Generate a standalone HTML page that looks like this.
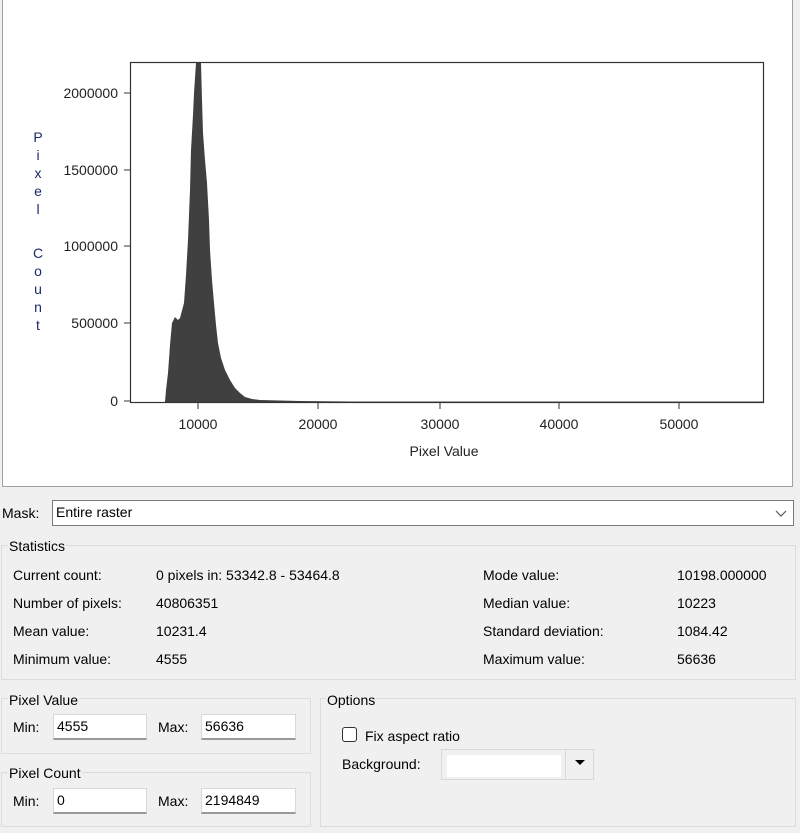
<!DOCTYPE html>
<html><head><style>
body{margin:0;width:800px;height:833px;background:#f0f0f0;font-family:"Liberation Sans",sans-serif;font-size:14px;color:#000;position:relative;overflow:hidden}
.a{position:absolute;white-space:nowrap}
.box{position:absolute;border:1px solid #dcdcdc}
.t{position:absolute;background:#f0f0f0;padding:0 1px;line-height:16px}
.in{position:absolute;background:#fff;border:1px solid #d8d8d8;border-bottom:2px solid #9a9a9a;box-sizing:border-box;padding-left:3px;line-height:22px}
</style></head><body>
<div style="position:absolute;left:2px;top:-1px;width:791px;height:488px;background:#fff;border:1px solid #a0a0a0;box-sizing:border-box"></div>
<svg class="a" style="left:0;top:0" width="800" height="480" font-family="Liberation Sans" font-size="14">
<path d="M165,402 L166,390 L168,373 L170,345 L172,323 L175,317 L178,320 L180,318 L184,303 L186,275 L188,240 L190,190 L191,150 L193,115 L194,93 L196,63 L201,63 L202,100 L203,133 L205,160 L207,183 L209,220 L210,250 L212,280 L214,303 L216,325 L218,343 L221,358 L225,370 L230,380 L235,388 L240,393 L245,397 L252,399 L260,400 L300,401 L350,401.5 L763,401.5 L763,402 Z" fill="#404040"/>
<rect x="130.5" y="62.5" width="633" height="340" fill="none" stroke="#333" stroke-width="1.2"/>
<g stroke="#333">
<line x1="124" y1="93" x2="130" y2="93"/><line x1="124" y1="170" x2="130" y2="170"/><line x1="124" y1="246" x2="130" y2="246"/><line x1="124" y1="323" x2="130" y2="323"/><line x1="124" y1="401" x2="130" y2="401"/>
<line x1="198" y1="402" x2="198" y2="409"/><line x1="318" y1="402" x2="318" y2="409"/><line x1="440" y1="402" x2="440" y2="409"/><line x1="559" y1="402" x2="559" y2="409"/><line x1="679" y1="402" x2="679" y2="409"/>
</g>
<g fill="#222" text-anchor="end">
<text x="118" y="98">2000000</text><text x="118" y="175">1500000</text><text x="118" y="251">1000000</text><text x="118" y="328">500000</text><text x="118" y="406">0</text>
</g>
<g fill="#222" text-anchor="middle">
<text x="198" y="429">10000</text><text x="318" y="429">20000</text><text x="440" y="429">30000</text><text x="559" y="429">40000</text><text x="679" y="429">50000</text>
<text x="444" y="456">Pixel Value</text>
</g>
<g fill="#1a2a6a" text-anchor="middle">
<text x="38" y="142">P</text><text x="38" y="160">i</text><text x="38" y="178">x</text><text x="38" y="196">e</text><text x="38" y="214">l</text>
<text x="38" y="258">C</text><text x="38" y="276">o</text><text x="38" y="294">u</text><text x="38" y="312">n</text><text x="38" y="330">t</text>
</g>
</svg>
<div class="a" style="left:2px;top:505px">Mask:</div>
<div class="in" style="left:52px;top:500px;width:742px;height:26px;border:1px solid #7a7a7a">Entire raster</div>
<svg class="a" style="left:774px;top:507px" width="14" height="12"><path d="M2,4 L7,9 L12,4" fill="none" stroke="#555" stroke-width="1.2"/></svg>
<div class="box" style="left:1px;top:545px;width:793px;height:133px"></div>
<div class="t" style="left:8px;top:538px">Statistics</div>
<div class="a" style="left:13px;top:567px">Current count:</div><div class="a" style="left:156px;top:567px">0 pixels in: 53342.8 - 53464.8</div>
<div class="a" style="left:13px;top:595px">Number of pixels:</div><div class="a" style="left:156px;top:595px">40806351</div>
<div class="a" style="left:13px;top:623px">Mean value:</div><div class="a" style="left:156px;top:623px">10231.4</div>
<div class="a" style="left:13px;top:651px">Minimum value:</div><div class="a" style="left:156px;top:651px">4555</div>
<div class="a" style="left:483px;top:567px">Mode value:</div><div class="a" style="left:677px;top:567px">10198.000000</div>
<div class="a" style="left:483px;top:595px">Median value:</div><div class="a" style="left:677px;top:595px">10223</div>
<div class="a" style="left:483px;top:623px">Standard deviation:</div><div class="a" style="left:677px;top:623px">1084.42</div>
<div class="a" style="left:483px;top:651px">Maximum value:</div><div class="a" style="left:677px;top:651px">56636</div>

<div class="box" style="left:1px;top:698px;width:308px;height:54px"></div>
<div class="t" style="left:8px;top:692px">Pixel Value</div>
<div class="a" style="left:13px;top:719px">Min:</div><div class="in" style="left:53px;top:714px;width:94px;height:26px">4555</div>
<div class="a" style="left:158px;top:719px">Max:</div><div class="in" style="left:201px;top:714px;width:95px;height:26px">56636</div>

<div class="box" style="left:1px;top:772px;width:308px;height:53px"></div>
<div class="t" style="left:8px;top:765px">Pixel Count</div>
<div class="a" style="left:13px;top:793px">Min:</div><div class="in" style="left:53px;top:788px;width:94px;height:26px">0</div>
<div class="a" style="left:158px;top:793px">Max:</div><div class="in" style="left:201px;top:788px;width:95px;height:26px">2194849</div>

<div class="box" style="left:320px;top:698px;width:474px;height:127px"></div>
<div class="t" style="left:326px;top:692px">Options</div>
<div class="a" style="left:342px;top:727px;width:15px;height:15px;border:1px solid #333;border-radius:3px;background:#fff;box-sizing:border-box"></div>
<div class="a" style="left:365px;top:728px">Fix aspect ratio</div>
<div class="a" style="left:342px;top:756px">Background:</div>
<div class="a" style="left:441px;top:749px;width:153px;height:31px;border:1px solid #d8d8d8;box-sizing:border-box;background:#f0f0f0"></div>
<div class="a" style="left:447px;top:755px;width:114px;height:22px;background:#fff"></div>
<div class="a" style="left:565px;top:749px;width:1px;height:31px;background:#d8d8d8"></div>
<svg class="a" style="left:574px;top:759px" width="12" height="8"><path d="M1,1 L11,1 L6,6 Z" fill="#000"/></svg>
</body></html>
